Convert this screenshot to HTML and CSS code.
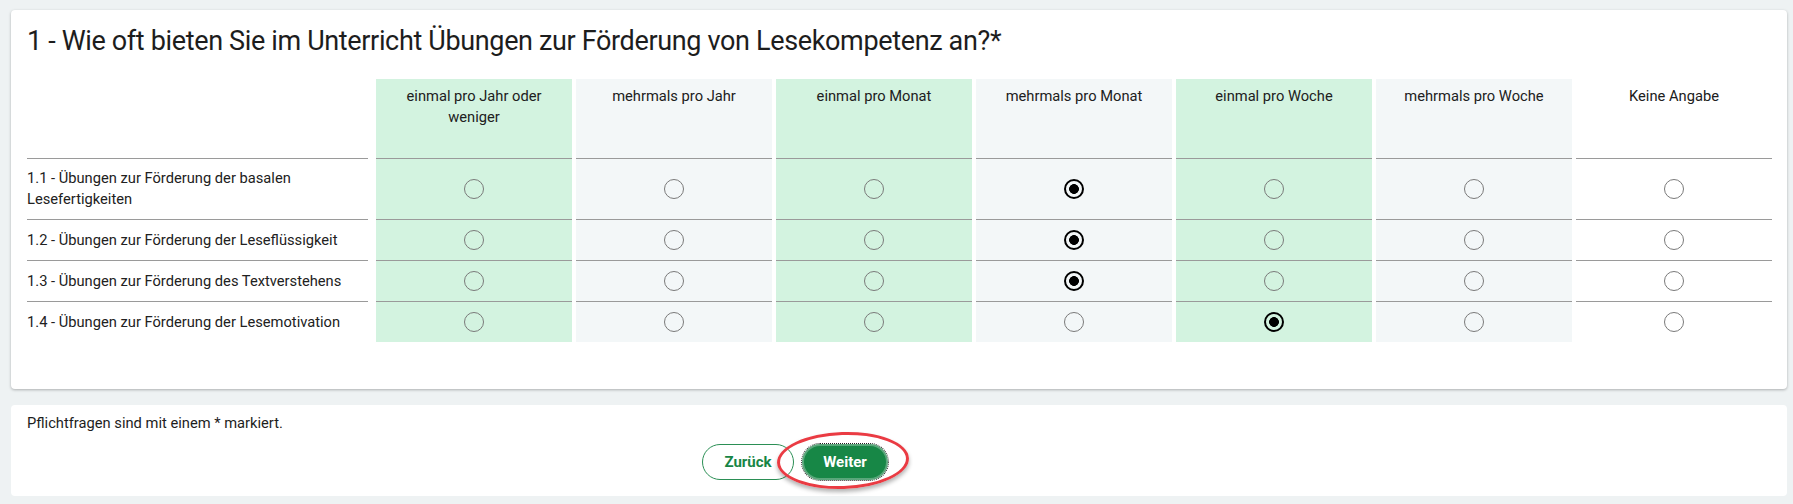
FILE: index.html
```html
<!DOCTYPE html>
<html lang="de">
<head>
<meta charset="utf-8">
<title>Umfrage</title>
<link rel="stylesheet" href="styles.css">
</head>
<body>
<main class="page">
  <section class="card question">
    <h1 class="q-title">1 - Wie oft bieten Sie im Unterricht Übungen zur Förderung von Lesekompetenz an?*</h1>
    <div class="matrix">
      <div class="cell head label"></div>
      <div class="cell head c-green">einmal pro Jahr oder weniger</div>
      <div class="cell head c-gray">mehrmals pro Jahr</div>
      <div class="cell head c-green">einmal pro Monat</div>
      <div class="cell head c-gray">mehrmals pro Monat</div>
      <div class="cell head c-green">einmal pro Woche</div>
      <div class="cell head c-gray">mehrmals pro Woche</div>
      <div class="cell head c-none">Keine Angabe</div>

      <div class="cell label first">1.1 - Übungen zur Förderung der basalen Lesefertigkeiten</div>
      <div class="cell first c-green"><input type="radio" name="q1"></div>
      <div class="cell first c-gray"><input type="radio" name="q1"></div>
      <div class="cell first c-green"><input type="radio" name="q1"></div>
      <div class="cell first c-gray"><input type="radio" name="q1" checked></div>
      <div class="cell first c-green"><input type="radio" name="q1"></div>
      <div class="cell first c-gray"><input type="radio" name="q1"></div>
      <div class="cell first c-none"><input type="radio" name="q1"></div>

      <div class="cell label">1.2 - Übungen zur Förderung der Leseflüssigkeit</div>
      <div class="cell c-green"><input type="radio" name="q2"></div>
      <div class="cell c-gray"><input type="radio" name="q2"></div>
      <div class="cell c-green"><input type="radio" name="q2"></div>
      <div class="cell c-gray"><input type="radio" name="q2" checked></div>
      <div class="cell c-green"><input type="radio" name="q2"></div>
      <div class="cell c-gray"><input type="radio" name="q2"></div>
      <div class="cell c-none"><input type="radio" name="q2"></div>

      <div class="cell label">1.3 - Übungen zur Förderung des Textverstehens</div>
      <div class="cell c-green"><input type="radio" name="q3"></div>
      <div class="cell c-gray"><input type="radio" name="q3"></div>
      <div class="cell c-green"><input type="radio" name="q3"></div>
      <div class="cell c-gray"><input type="radio" name="q3" checked></div>
      <div class="cell c-green"><input type="radio" name="q3"></div>
      <div class="cell c-gray"><input type="radio" name="q3"></div>
      <div class="cell c-none"><input type="radio" name="q3"></div>

      <div class="cell label">1.4 - Übungen zur Förderung der Lesemotivation</div>
      <div class="cell c-green"><input type="radio" name="q4"></div>
      <div class="cell c-gray"><input type="radio" name="q4"></div>
      <div class="cell c-green"><input type="radio" name="q4"></div>
      <div class="cell c-gray"><input type="radio" name="q4"></div>
      <div class="cell c-green"><input type="radio" name="q4" checked></div>
      <div class="cell c-gray"><input type="radio" name="q4"></div>
      <div class="cell c-none"><input type="radio" name="q4"></div>
    </div>
  </section>

  <section class="card footer">
    <p class="note">Pflichtfragen sind mit einem * markiert.</p>
    <div class="nav">
      <button class="btn btn-outline" type="button">Zurück</button>
      <span class="btn-wrap">
        <button class="btn btn-primary" type="button">Weiter</button>
        <span class="annot"></span>
      </span>
    </div>
  </section>
</main>
</body>
</html>
```

FILE: styles.css
```css
* { box-sizing: border-box; }

html, body {
  margin: 0;
  padding: 0;
}

body {
  background: #eef2f3;
  font-family: Roboto, "Noto Sans", "Liberation Sans", sans-serif;
  color: #212121;
  font-size: 14.7px;
}

.page {
  display: flex;
  flex-direction: column;
  gap: 16px;
  padding: 10px 6px 7px 11px;
}

.card {
  background: #fff;
  border-radius: 4px;
}

.question {
  padding: 14px 15px 47px 16px;
  box-shadow: 0 1px 3px rgba(0, 0, 0, 0.28);
}

.q-title {
  margin: 0 0 20px 0;
  font-size: 27px;
  letter-spacing: -0.35px;
  line-height: 35px;
  font-weight: 400;
  color: #1d1d1d;
}

.matrix {
  display: grid;
  grid-template-columns: 345px repeat(7, 196px);
  grid-template-rows: 80px 60px 41px 41px 41px;
  column-gap: 4px;
}

.cell {
  display: flex;
  align-items: center;
  justify-content: center;
  border-top: 1px solid #9a9a9a;
  line-height: 21px;
}

.cell.first { border-top: none; }

.cell.head {
  border-top: none;
  border-bottom: 1px solid #9a9a9a;
  align-items: flex-start;
  text-align: center;
  padding: 7px 20px 0;
  color: #202020;
}

.cell.label {
  justify-content: flex-start;
  text-align: left;
  padding-right: 20px;
  margin-right: 4px;
}

.c-green { background: #d3f3e0; }
.c-gray { background: #f3f7f8; }
.c-none { background: #fff; }

input[type="radio"] {
  appearance: none;
  -webkit-appearance: none;
  margin: 0;
  width: 20px;
  height: 20px;
  border-radius: 50%;
  border: 1px solid #7a7a7a;
  background: transparent;
}

input[type="radio"]:checked {
  border: 2px solid #000;
  background: radial-gradient(circle, #000 0 4.6px, transparent 5.2px);
}

.footer {
  padding: 8px 16px 16px 16px;
}

.note {
  margin: 0;
  line-height: 21px;
  color: #1d1d1d;
}

.nav {
  display: flex;
  gap: 8px;
  margin-top: 10px;
  padding-left: 675px;
}

.btn {
  height: 36px;
  border-radius: 18px;
  font-family: Roboto, "Noto Sans", "Liberation Sans", sans-serif;
  font-size: 15px;
  font-weight: 700;
  cursor: pointer;
}

.btn-outline {
  width: 92px;
  background: #fff;
  color: #178545;
  border: 1px solid #2b8f55;
}

.btn-wrap {
  position: relative;
  display: inline-flex;
}

.btn-primary {
  width: 86px;
  background: #178746;
  color: #fff;
  border: 2px solid #5aa77b;
  outline: 1px dotted #222;
  outline-offset: 0;
}

.annot {
  position: absolute;
  left: -25px;
  top: -12px;
  width: 132px;
  height: 57px;
  border: 3px solid #ea3b43;
  border-radius: 50%;
  box-shadow: 0 3px 4px rgba(0, 0, 0, 0.3);
  transform: rotate(-2deg);
  pointer-events: none;
}
```
